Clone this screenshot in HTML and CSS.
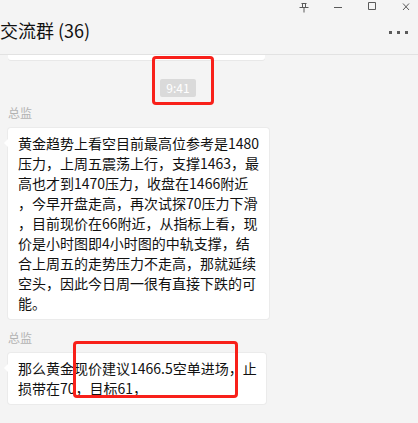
FILE: index.html
```html
<!DOCTYPE html>
<html lang="zh-CN">

<head>
    <meta charset="utf-8">
    <meta name="viewport" content="width=device-width, initial-scale=1.0">
    <title>交流群</title>
    <link rel="stylesheet" href="styles.css">
</head>

<body>
    <header class="top">
        <div class="controls">
            <svg class="ctl" viewBox="0 0 12 12"><path d="M3.5 2.5h5M4.5 2.5v4M7.5 2.5v4M1.5 6.5h9M6 6.5v5"/></svg>
            <svg class="ctl" viewBox="0 0 12 12"><path d="M2 6.5h8"/></svg>
            <svg class="ctl" viewBox="0 0 12 12"><path d="M2.5 1.5h7v7h-7z"/></svg>
            <svg class="ctl" viewBox="0 0 12 12"><path d="M3 2.5l6 6.5M9 2.5l-6 6.5"/></svg>
        </div>
        <div class="titel">
            <h1>交流群 (36)</h1>
            <div class="mere"><i></i><i></i><i></i></div>
        </div>
    </header>

    <main class="chat">
        <div class="rest"></div>

        <div class="tid">
            <span class="klokken">9:41</span>
            <span class="ramme ramme-tid"></span>
        </div>

        <article class="besked">
            <div class="navn">总监</div>
            <div class="boble boble-lang">黄金趋势上看空目前最高位参考是1480<br>压力<b>，</b>上周五震荡上行<b>，</b>支撑1463<b>，</b>最<br>高也才到1470压力<b>，</b>收盘在1466附近<br><b>，</b>今早开盘走高<b>，</b>再次试探70压力下滑<br><b>，</b>目前现价在66附近<b>，</b>从指标上看<b>，</b>现<br>价是小时图即4小时图的中轨支撑<b>，</b>结<br>合上周五的走势压力不走高<b>，</b>那就延续<br>空头<b>，</b>因此今日周一很有直接下跌的可<br>能。</div>
        </article>

        <article class="besked besked-to">
            <div class="navn">总监</div>
            <div class="boble boble-kort">那么黄金现价建议1466.5空单进场<b>，</b>止<br>损带在70<b>，</b>目标61<b>，</b><span class="ramme ramme-tekst"></span></div>
        </article>
    </main>
</body>

</html>
```

FILE: styles.css
```css
body {
    margin: 0;
    background: #f4f4f4;
    font-family: "Noto Sans CJK SC", sans-serif;
    color: #111;
    width: 418px;
    height: 423px;
    overflow: hidden;
}

.top {
    height: 54px;
    border-bottom: 1px solid #e2e2e2;
}

.controls {
    display: flex;
    justify-content: flex-end;
    gap: 22px;
    padding: 1px 6px 0 0;
    height: 14px;
}

.ctl {
    width: 12px;
    height: 12px;
    fill: none;
    stroke: #5a5a5a;
    stroke-width: 1;
}

.titel {
    display: flex;
    justify-content: space-between;
    align-items: flex-start;
    padding-top: 3px;
}

h1 {
    margin: 0;
    font-size: 18px;
    font-weight: normal;
    line-height: 24px;
    color: #111;
}

.mere {
    display: flex;
    gap: 5px;
    padding: 13px 10px 0 0;
}

.mere i {
    width: 3px;
    height: 3px;
    background: #5a5a5a;
}

.chat {
    padding-left: 8px;
}

.rest {
    width: 257px;
    height: 5px;
    background: #fff;
    border-radius: 0 0 3px 3px;
    box-shadow: 0 1px 0 #e8e8e8;
}

.tid {
    position: relative;
    margin: 19px 0 0 152px;
    width: 36px;
    height: 18px;
}

.klokken {
    display: block;
    background: #dadada;
    color: #fff;
    font-size: 12px;
    line-height: 18px;
    text-align: center;
    border-radius: 2px;
}

.ramme {
    position: absolute;
    border: 3px solid #f8201a;
    border-radius: 4px;
    box-sizing: border-box;
}

.ramme-tid {
    left: -8px;
    top: -23px;
    width: 62px;
    height: 49px;
}

.besked {
    margin-top: 7px;
}

.besked-to {
    margin-top: 10px;
}

.navn {
    font-size: 12px;
    line-height: 17px;
    color: #b3b3b3;
}

.boble {
    position: relative;
    margin-top: 7px;
    background: #fff;
    border-radius: 3px;
    box-shadow: 0 0 0 1px #ebebeb;
    padding: 5px 10px 6px;
    font-size: 14px;
    line-height: 20px;
    white-space: nowrap;
}

/* kommaer centreret som i originalen */
.boble b {
    font-weight: normal;
    font-family: "Noto Sans CJK TC", sans-serif;
}

.boble::before {
    content: "";
    position: absolute;
    left: -4px;
    top: 11px;
    border-right: 4px solid #fff;
    border-top: 4px solid transparent;
    border-bottom: 4px solid transparent;
}

.boble-lang {
    width: 241px;
}

.boble-kort {
    width: 238px;
}

.ramme-tekst {
    left: 65px;
    top: -12px;
    width: 165px;
    height: 57px;
}
```
